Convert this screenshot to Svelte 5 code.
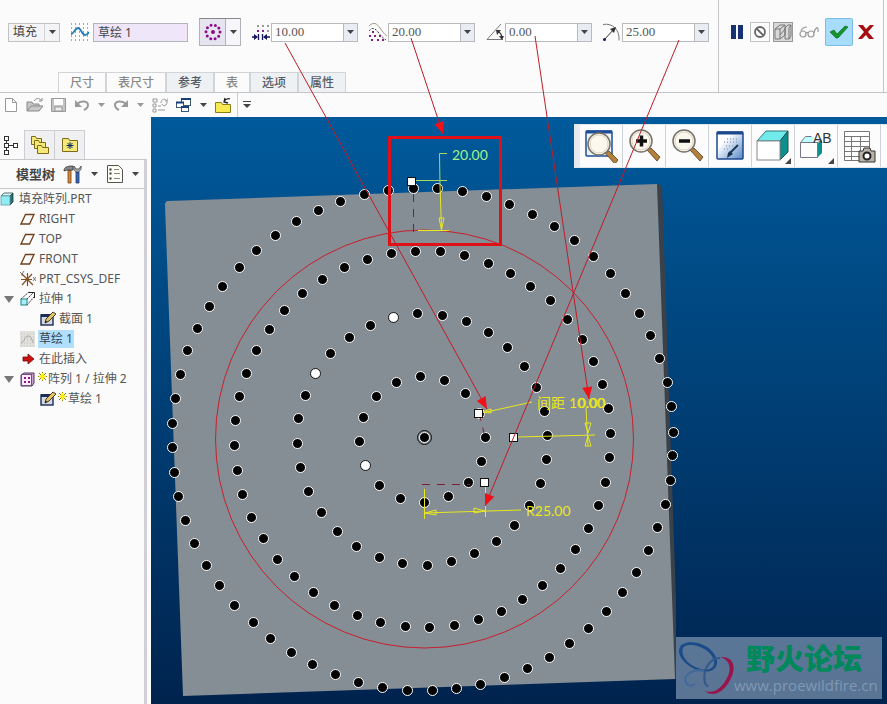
<script lang="ts">
  type Point = [number, number]

  interface Field {
    id: string
    label: string
    value: string
  }

  interface TreeNode {
    label: string
    icon: string
    level: number
    open?: boolean
    selected?: boolean
    fresh?: boolean
  }

  let boundary = $state("填充")
  let sketchName = $state("草绘 1")

  let fields: Field[] = $state([
    { id: "spacing", label: "间距", value: "10.00" },
    { id: "border", label: "边界距离", value: "20.00" },
    { id: "angle", label: "旋转角度", value: "0.00" },
    { id: "radius", label: "径向间距", value: "25.00" },
  ])

  const tabs = [
    { label: "尺寸", enabled: false },
    { label: "表尺寸", enabled: false },
    { label: "参考", enabled: true },
    { label: "表", enabled: false },
    { label: "选项", enabled: true },
    { label: "属性", enabled: true },
  ]

  const tree: TreeNode[] = [
    { label: "填充阵列.PRT", icon: "part", level: 0 },
    { label: "RIGHT", icon: "plane", level: 1 },
    { label: "TOP", icon: "plane", level: 1 },
    { label: "FRONT", icon: "plane", level: 1 },
    { label: "PRT_CSYS_DEF", icon: "csys", level: 1 },
    { label: "拉伸 1", icon: "extrude", level: 1, open: true },
    { label: "截面 1", icon: "section", level: 2 },
    { label: "草绘 1", icon: "sketch", level: 1, selected: true },
    { label: "在此插入", icon: "insert", level: 1 },
    { label: "阵列 1 / 拉伸 2", icon: "pattern", level: 1, open: true, fresh: true },
    { label: "草绘 1", icon: "section", level: 2, fresh: true },
  ]

  const viewTools = [
    { id: "refit", label: "重新调整" },
    { id: "zoomin", label: "放大" },
    { id: "zoomout", label: "缩小" },
    { id: "repaint", label: "重画" },
    { id: "shading", label: "显示样式" },
    { id: "saved", label: "已命名视图" },
    { id: "manager", label: "视图管理器" },
  ]

  // pattern members, one list per ring from the inside out
  const dots: Point[] = [
    [485, 437], [481, 461], [468, 482], [448, 496], [424, 502], [400, 498], [379, 485],
    [359, 441], [363, 417], [376, 396], [396, 382], [420, 376], [444, 380], [465, 393], [479, 413],

    [417, 313], [370, 325], [349, 337], [330, 353], [305, 395], [298, 418], [297, 443],
    [300, 467], [308, 491], [321, 512], [337, 531], [356, 546], [379, 557], [402, 563], [427, 565],
    [451, 561], [474, 553], [496, 541], [514, 525], [529, 505], [540, 483], [546, 459], [547, 435],
    [544, 411], [536, 387], [524, 366], [507, 347], [488, 332], [466, 321], [442, 315],

    [415, 251], [391, 253], [367, 259], [344, 267], [322, 279], [302, 293], [284, 310], [269, 329],
    [256, 350], [246, 373], [239, 396], [235, 420], [234, 445], [237, 470], [242, 494], [251, 517],
    [263, 538], [277, 559], [294, 576], [313, 592], [334, 605], [357, 615], [380, 622], [405, 626],
    [429, 627], [454, 625], [478, 619], [501, 611], [522, 599], [542, 585], [560, 568], [575, 549],
    [588, 528], [598, 505], [605, 482], [609, 457], [610, 433], [608, 408], [602, 384], [593, 361],
    [582, 339], [567, 319], [550, 300], [530, 286], [510, 273], [488, 263], [464, 255], [440, 251],

    [413, 188], [388, 190], [364, 194], [340, 201], [318, 210], [296, 221], [275, 235], [256, 250],
    [239, 267], [222, 286], [209, 306], [197, 328], [187, 350], [180, 374], [175, 398], [172, 423],
    [172, 447], [174, 472], [178, 496], [185, 520], [194, 543], [206, 565], [219, 585], [234, 605],
    [253, 622], [270, 638], [291, 652], [312, 664], [335, 674], [358, 682], [382, 687], [407, 690],
    [432, 690], [456, 688], [480, 684], [504, 677], [527, 668], [549, 657], [569, 643], [588, 628],
    [606, 611], [622, 592], [636, 572], [648, 550], [657, 527], [665, 504], [670, 480], [672, 455],
    [673, 432], [671, 406], [667, 382], [659, 358], [650, 335], [639, 313], [625, 293], [610, 273],
    [593, 256], [574, 240], [554, 226], [532, 214], [509, 204], [486, 196], [462, 191], [437, 188],
  ]

  // members that were switched off
  const skipped: Point[] = [[393, 317], [315, 373], [365, 465]]
  const handles: Point[] = [[411, 181], [478, 413], [513, 437], [484, 482]]

  const arrows: { from: Point; to: Point }[] = [
    { from: [285, 43], to: [487, 409] },
    { from: [411, 38], to: [443, 134] },
    { from: [535, 36], to: [589, 399] },
    { from: [679, 40], to: [485, 506] },
  ]

  function head(from: Point, to: Point) {
    const a = Math.atan2(to[1] - from[1], to[0] - from[0])
    const bx = to[0] - 12 * Math.cos(a)
    const by = to[1] - 12 * Math.sin(a)
    const dx = 5 * Math.sin(a)
    const dy = -5 * Math.cos(a)
    return `${to[0]},${to[1]} ${bx + dx},${by + dy} ${bx - dx},${by - dy}`
  }
</script>

{#snippet fieldIcon(id: string)}
  <svg class="icon" width="18" height="18" viewBox="0 0 18 18" aria-hidden="true">
    {#if id === "spacing"}
      <g fill="#999">
        <rect x="5" y="2" width="2" height="2" /><rect x="10" y="2" width="2" height="2" /><rect x="15" y="2" width="2" height="2" />
        <rect x="15" y="7" width="2" height="2" />
      </g>
      <g fill="#80208a"><rect x="5" y="7" width="2" height="2" /><rect x="10" y="7" width="2" height="2" /></g>
      <path d="M6.500 11v6M10.500 11v6M0 14h5M12 14h6" fill="none" stroke="#16165a" stroke-width="1.300" />
      <path d="M2 11l4 3-4 3zM15 11l-4 3 4 3z" fill="#16165a" />
    {:else if id === "border"}
      <path d="M0 3C5-2 8 1 11 5s4 6 7 8" fill="none" stroke="#a09880" />
      <path d="M0 8c3-4 6-3 9 1s5 6 8 8" fill="none" stroke="#333" stroke-dasharray="2 1.500" />
      <g fill="#802080">
        <rect x="3" y="8" width="2" height="2" /><rect x="0" y="12" width="2" height="2" /><rect x="5" y="12" width="2" height="2" />
        <rect x="10" y="12" width="2" height="2" /><rect x="2" y="16" width="2" height="2" /><rect x="8" y="16" width="2" height="2" /><rect x="13" y="16" width="2" height="2" />
      </g>
    {:else if id === "angle"}
      <path d="M15 1 1 16.500h16" fill="none" stroke="#777" />
      <path d="M11 8c3 1 5 4 5 8" fill="none" stroke="#333" stroke-width="1.300" />
      <path d="M10 7l5 0-4 5zM13 13l5 0-2 4z" fill="#333" />
    {:else}
      <path d="M0 1.500c10-2 17 6 16 16" fill="none" stroke="#777" />
      <path d="M1 17 12 5" stroke="#333" />
      <path d="m13 4-6 2 4 4z" fill="#333" /><circle cx="1.500" cy="16.500" r="1.500" fill="#16165a" />
    {/if}
  </svg>
{/snippet}

{#snippet down(disabled: boolean)}
  <svg class="icon caret" class:off={disabled} width="7" height="4" viewBox="0 0 7 4" aria-hidden="true"><path d="M0 0h7L3.500 4z" /></svg>
{/snippet}

{#snippet treeIcon(id: string)}
  <svg class="icon" width="16" height="16" viewBox="0 0 16 16" aria-hidden="true">
    {#if id === "part"}
      <path d="M1 5l3-3h9l-3 3z" fill="#c8ffff" stroke="#444" stroke-width=".8" />
      <path d="M10 5l3-3v9l-3 3z" fill="#147c80" stroke="#333" stroke-width=".8" />
      <rect x="1" y="5" width="9" height="9" fill="#8eeef4" stroke="#69a" stroke-width=".8" />
    {:else if id === "plane"}
      <path d="M5.500 3.500H14L9.500 13H1z" fill="none" stroke="#70401c" stroke-width="1.300" />
    {:else if id === "csys"}
      <path d="M2 3l11 11M12 3 2 14M7.500 2v13M1 8.500h11" stroke="#805020" stroke-width="1.200" />
      <path d="M13 6l3 4M16 6l-3 4M0 1l2 2 2-3M2 3v2" fill="none" stroke="#555" stroke-width=".8" />
    {:else if id === "extrude"}
      <path d="M1 8 9 1M7 14l7-8M7 8l7-7" fill="none" stroke="#333" stroke-dasharray="2 1" />
      <rect x="1" y="8" width="6" height="6" fill="#a5f2f6" stroke="#287f86" />
      <path d="M9 1.500h5.500V7" fill="none" stroke="#222" />
    {:else if id === "section"}
      <rect x="1" y="4" width="12" height="10" fill="#d4d8e2" stroke="#182c54" stroke-width="1.400" />
      <path d="M1 3h12v3H1z" fill="#182c54" />
      <path d="M5 12l1-4 7-7 3 2-7 7z" fill="#e4c46a" stroke="#3a2c10" stroke-width=".9" />
      <path d="M5 12l.5-2.500L7.500 11z" fill="#222" />
    {:else if id === "sketch"}
      <rect x="0" y="0" width="15" height="16" fill="#e2e0dc" />
      <path d="M1 3h15M1 6h15M1 9h15M1 12h15M1 15h15" stroke="#c4c2bc" stroke-dasharray="1 2" />
      <path d="M1 12c3 0 4-7 7-7s4 3 5 7" fill="none" stroke="#aaa69e" />
    {:else if id === "insert"}
      <path d="M3 6h5V3l6 5-6 5v-3H3z" fill="#d01010" stroke="#601010" stroke-width=".8" />
    {:else}
      <path d="M1 4l3-2h10v10l-2 3H1z" fill="#c8a0d0" stroke="#503860" />
      <rect x="1.500" y="3.500" width="10" height="11" fill="#fce8fc" stroke="#70507c" />
      <path d="M4 6h2v2H4zM8 6h2v2H8zM4 10h2v2H4zM8 10h2v2H8z" fill="#802080" />
    {/if}
  </svg>
{/snippet}

{#snippet lens(sign: string)}
  <path d="M20 21l4-2 9 9-3 4z" fill="#b3803d" stroke="#583c18" stroke-width=".8" />
  <circle cx="14" cy="12" r="11" fill="#fbf8ee" stroke="#77716a" stroke-width="1.500" />
  <circle cx="14" cy="12" r="9" fill="none" stroke="#ddd5c4" />
  {#if sign}
    <path d={sign} stroke="#111" stroke-width="3.500" />
  {/if}
{/snippet}

{#snippet viewIcon(id: string)}
  <svg class="icon" width="34" height="34" viewBox="0 0 34 34" aria-hidden="true">
    {#if id === "refit"}
      <rect x="2" y="2" width="26" height="25" rx="1" fill="#eef3fb" stroke="#1d4d98" stroke-width="1.500" />
      <path d="M2 3h26" stroke="#1d4d98" stroke-width="3" />
      <g transform="translate(1 3)">{@render lens("")}</g>
    {:else if id === "zoomin"}
      {@render lens("M9 12h11M14.500 6.500v11")}
    {:else if id === "zoomout"}
      {@render lens("M9 12h11")}
    {:else if id === "repaint"}
      <defs><linearGradient id="sheet" x2="1" y2="1"><stop offset=".3" stop-color="#fff" /><stop offset="1" stop-color="#5587c6" /></linearGradient></defs>
      <rect x="4" y="3" width="26" height="27" rx="1" fill="url(#sheet)" stroke="#1c488c" stroke-width="1.500" />
      <path d="M4 4h26" stroke="#1c488c" stroke-width="3" />
      <path d="M14 10h12M11 13h14M13 17h8M11 20h6" stroke="#8fa6c4" stroke-width="1.500" stroke-dasharray="1 2" />
      <path d="M25 16 16 25" stroke="#18385c" stroke-width="2" /><path d="M17 22l3 3-6 4 1-5z" fill="#163456" />
    {:else if id === "shading"}
      <path d="M1 12 10 2h22l-8 10z" fill="#70eaea" stroke="#377" />
      <path d="M24 12l8-10v21l-8 8z" fill="#0a908f" stroke="#255" />
      <rect x="1" y="12" width="23" height="19" fill="#fff" stroke="#888" />
    {:else if id === "saved"}
      <path d="M2 13l5-5h8l-2 5z" fill="#baffff" /><path d="M18 15l5-4v13l-5 5z" fill="#0a908f" />
      <path d="M1.500 13.500l5-6h6M1.500 13.500h17v15h-17zM18 14l5-3" fill="none" stroke="#778" />
      <text x="14" y="14" class="ab">AB</text>
    {:else}
      <path d="M2.500 2.500h25v29h-25zM2.500 7.500h25M2.500 12.500h25M2.500 17.500h25M2.500 22.500h25M2.500 27.500h25M9.500 7.500v24M18.500 7.500v24" fill="#fff" stroke="#777" />
      <path d="M17 22h4l1-3h6l1 3h4v11H17z" fill="#b9b4a8" stroke="#333" />
      <circle cx="25" cy="27" r="3.500" fill="#fff" stroke="#222" stroke-width="2" />
    {/if}
  </svg>
{/snippet}

<main class="app">
  <header class="ribbon">
    <section class="dashboard">
      <div class="params">
        <span class="select-box">
          <select bind:value={boundary} aria-label="阵列类型"><option>填充</option></select>
          <span class="select-arrow">{@render down(false)}</span>
        </span>

        <label class="param name-param">
          <svg class="icon" width="18" height="18" viewBox="0 0 18 18" aria-hidden="true">
            <path d="M0 1h18M0 5h18M0 9h18M0 13h18M0 17h18" stroke="#555" stroke-dasharray="1 3" />
            <path d="M0 11c3 0 4-6 7-6s4 7 7 7c2 0 3-1 4-3" fill="none" stroke="#247eb8" stroke-width="1.800" />
          </svg>
          <input class="sketch-name" bind:value={sketchName} aria-label="草绘" />
        </label>

        <div class="grid-type">
          <button type="button" class="grid-main" aria-label="栅格模板">
            <svg class="icon" width="20" height="20" viewBox="0 0 20 20" aria-hidden="true">
              <circle cx="10" cy="10" r="7" fill="none" stroke="#8c0c8c" stroke-width="3" stroke-linecap="round" stroke-dasharray="0 4.400" />
              <circle cx="10" cy="10" r="2" fill="#8c0c8c" />
            </svg>
          </button>
          <button type="button" class="grid-more" aria-label="更多模板">{@render down(false)}</button>
        </div>

        {#each fields as field (field.id)}
          <div class="param">
            {@render fieldIcon(field.id)}
            <div class="combo">
              <input bind:value={field.value} aria-label={field.label} />
              <button type="button" aria-label="{field.label}列表">{@render down(false)}</button>
            </div>
          </div>
        {/each}
      </div>

      <nav class="tabs">
        {#each tabs as tab (tab.label)}
          <button type="button" class:enabled={tab.enabled}>{tab.label}</button>
        {/each}
      </nav>
    </section>

    <section class="actions">
      <button type="button" class="act pause" aria-label="暂停">
        <svg class="icon" width="12" height="14" viewBox="0 0 12 14"><path d="M0 0h5v14H0zM7 0h5v14H7z" fill="#163272" /></svg>
      </button>
      <button type="button" class="act boxed" aria-label="无预览">
        <svg class="icon" width="14" height="14" viewBox="0 0 14 14"><circle cx="7" cy="7" r="5" fill="none" stroke="#666" stroke-width="1.800" /><path d="M3.500 3.500l7 7" stroke="#666" stroke-width="1.800" /></svg>
      </button>
      <button type="button" class="act boxed pressed" aria-label="分离预览">
        <svg class="icon" width="18" height="18" viewBox="0 0 18 18"><path d="M1 6l5-4h5v10l-5 4H1zM1 6h5v10M6 6l5-4M11 5l3-3h3v11l-2 3h-4zM15 16V5M15 5l2-3M6 12l5-6" fill="none" stroke="#777" /></svg>
      </button>
      <button type="button" class="act glasses" aria-label="验证">
        <svg class="icon" width="20" height="12" viewBox="0 0 20 12"><g fill="none" stroke="#999" stroke-width="1.200"><circle cx="4" cy="8" r="3" /><circle cx="12" cy="8" r="3" /><path d="M7 7c1-1 1-1 2 0M2 5c1-3 3-4 6-4M15 7c1-5 4-7 4-4v3" /></g></svg>
      </button>
      <button type="button" class="act ok" aria-label="确定">
        <svg class="icon" width="18" height="14" viewBox="0 0 18 14"><path d="M0 7l4-2 3 4 8-8 3 1L8 13H6z" fill="#12952c" stroke="#056018" stroke-width=".6" /></svg>
      </button>
      <button type="button" class="act cancel" aria-label="取消">
        <svg class="icon" width="16" height="14" viewBox="0 0 16 14"><path d="M0 0h5l3 4 4-4h4l-6 7 6 7h-5l-3-4-4 4H0l6-7z" fill="#a60d12" /></svg>
      </button>
    </section>
    <div class="ribbon-end"></div>
  </header>

  <nav class="quickbar" aria-label="快速访问">
    <button type="button" class="q" aria-label="新建">
      <svg class="icon" width="14" height="16" viewBox="0 0 14 16"><path d="M1.500 1.500h7l4 4v9h-11zM8.500 1.500v4h4" fill="#fff" stroke="#999" /></svg>
    </button>
    <button type="button" class="q" aria-label="打开">
      <svg class="icon" width="17" height="16" viewBox="0 0 17 16"><path d="M1 14V5h5l1 2h6v2M1 14l4-5h12l-4 5z" fill="#c8c8c8" stroke="#888" /><path d="M8 4c2-3 5-3 7-1m1-2v3h-3" fill="none" stroke="#888" /></svg>
    </button>
    <button type="button" class="q" aria-label="保存">
      <svg class="icon" width="15" height="16" viewBox="0 0 15 16"><path d="M.5 1.500h14v13H.5z" fill="#c4c4c4" stroke="#999" /><path d="M3 2h9v6H3z" fill="#fff" /><path d="M4 10h7v4H4z" fill="#eee" stroke="#999" /></svg>
    </button>
    <button type="button" class="q" aria-label="撤消">
      <svg class="icon" width="16" height="12" viewBox="0 0 16 12"><path d="M3 5c4-4 11-3 11 1 0 3-2 4-4 5" fill="none" stroke="#999" stroke-width="2" /><path d="M1 1v7h7z" fill="#999" /></svg>
    </button>
    {@render down(true)}
    <button type="button" class="q" aria-label="重做">
      <svg class="icon" width="16" height="12" viewBox="0 0 16 12"><path d="M13 5C9 1 2 2 2 6c0 3 2 4 4 5" fill="none" stroke="#999" stroke-width="2" /><path d="M15 1v7H8z" fill="#999" /></svg>
    </button>
    {@render down(true)}
    <button type="button" class="q" aria-label="重新生成">
      <svg class="icon" width="16" height="16" viewBox="0 0 16 16"><path d="M1 2h4v3H1zM1 7h3v3H1zM1 12h3v3H1zM6 13h7M6 9h3M9 6c0-4 4-5 6-2M15 5c0 4-4 5-5 2M13 4h3V1" fill="none" stroke="#999" /></svg>
    </button>
    <button type="button" class="q" aria-label="窗口">
      <svg class="icon" width="16" height="16" viewBox="0 0 16 16"><g fill="#fff" stroke="#3c5878"><rect x="5.500" y="1.500" width="9" height="7" /><rect x=".5" y="5.500" width="7" height="5" /><rect x="5.500" y="9.500" width="7" height="5" /></g><path d="M5 2h10M0 5.500h8M5 10h8" stroke="#173f78" stroke-width="2" /></svg>
    </button>
    {@render down(false)}
    <button type="button" class="q" aria-label="关闭">
      <svg class="icon" width="17" height="17" viewBox="0 0 17 17"><path d="M.5 5.500h6l1 2h8v8H.5z" fill="#f6ea50" stroke="#8a7c18" /><path d="M9 4c2-2 4-3 6-2M10 1 9 5l4 1" fill="none" stroke="#222" stroke-width="1.300" /></svg>
    </button>
    <span class="q-sep"></span>
    <button type="button" class="q" aria-label="自定义">
      <svg class="icon" width="8" height="8" viewBox="0 0 8 8"><path d="M0 0h8v1H0zM0 3h8L4 7z" fill="#444" /></svg>
    </button>
  </nav>

  <div class="workspace">
    <aside class="navigator">
      <div class="nav-tabs">
        <button type="button" class="active" aria-label="模型树">
          <svg class="icon" width="16" height="20" viewBox="0 0 16 20"><path d="M4.500 5v11M4 10.500h8" fill="none" stroke="#333" /><g fill="#fff" stroke="#333"><rect x="2.500" y="1.500" width="4" height="4" /><rect x="2.500" y="8.500" width="4" height="4" /><rect x="2.500" y="15.500" width="4" height="4" /><rect x="11.500" y="8.500" width="4" height="4" /></g></svg>
        </button>
        <button type="button" aria-label="文件夹浏览器">
          <svg class="icon" width="20" height="20" viewBox="0 0 20 20"><g fill="#f3e878" stroke="#7a6c1a"><path d="M1.500 1.500h4l1 2h5v6h-10z" /><path d="M4.500 5.500h4l1 2h6v6h-11z" /><path d="M7.500 10.500h4l1 2h6v6h-11z" /></g></svg>
        </button>
        <button type="button" aria-label="收藏夹">
          <svg class="icon" width="18" height="16" viewBox="0 0 18 16"><path d="M1.500 1.500h6l1 2h8v11h-15z" fill="#f3e878" stroke="#7a6c1a" /><path d="M9 5v7M5.500 8.500h7M6.500 6l5 5M11.500 6l-5 5" stroke="#102c60" /></svg>
        </button>
      </div>

      <div class="tree-head">
        <h2>模型树</h2>
        <button type="button" class="q" aria-label="设置">
          <svg class="icon" width="20" height="20" viewBox="0 0 20 20"><path d="M5 6h3v13H5z" fill="#d8863c" stroke="#734218" stroke-width=".8" /><path d="M1 7c0-4 3-5 9-5v4H4z" fill="#888" stroke="#333" stroke-width=".8" /><path d="M13 8h3v11h-3z" fill="#3468b0" stroke="#1c3c70" stroke-width=".8" /><path d="M11 2c-1 4 1 6 3 6s5-2 4-6l-2 3h-3z" fill="#aaa" stroke="#444" stroke-width=".8" /></svg>
        </button>
        {@render down(false)}
        <button type="button" class="q" aria-label="显示">
          <svg class="icon" width="18" height="20" viewBox="0 0 18 20"><path d="M1.500 1.500h11l4 4v13h-15z" fill="#fffef4" stroke="#555" /><path d="M3.500 5.500h2M3.500 9.500h2M3.500 14.500h2" stroke="#333" stroke-width="2" /><path d="M8 5.500h5M8 9.500h6M8 14.500h6" stroke="#888" /></svg>
        </button>
        {@render down(false)}
      </div>

      <ul class="tree">
        {#each tree as node}
          <li class="row level-{node.level}">
            {#if node.level === 1}
              <span class="twist">
                {#if node.open}
                  <svg class="icon" width="10" height="7" viewBox="0 0 10 7" aria-hidden="true"><path d="M0 0h10L5 7z" fill="#777" /></svg>
                {/if}
              </span>
            {/if}
            {@render treeIcon(node.icon)}
            {#if node.fresh}
              <svg class="icon star" width="9" height="9" viewBox="0 0 9 9" aria-hidden="true"><path d="M4.500 0v9M0 4.500h9M1 1l7 7M8 1 1 8" stroke="#8c8400" /><path d="M4.500 1v7M1 4.500h7" stroke="#ffee20" stroke-width="2" /></svg>
            {/if}
            <span class="node-label" class:selected={node.selected} class:tight={node.fresh}>{node.label}</span>
          </li>
        {/each}
      </ul>
    </aside>

    <section class="canvas">
      <svg class="scene" aria-label="填充阵列">
        <g transform="translate(-151 -117)">
          <path d="M657 184 662 186 676 600 676 679 674 679z" fill="#3a4148" />
          <path d="M168 201 657 184 675 679 183 696 165 205q0-4 3-4z" fill="#858d95" />
          <circle class="sketch" cx="424.500" cy="439" r="209" />

          <g transform="translate(.5 .5)">
            {#each dots as [x, y]}
              <circle class="dot" cx={x} cy={y} r="5" />
            {/each}
            {#each skipped as [x, y]}
              <circle class="dot skipped" cx={x} cy={y} r="5" />
            {/each}
            <circle cx="424" cy="437" r="7" fill="none" stroke="#111" />
            <circle class="dot" cx="424" cy="437" r="5" />
          </g>

          <path class="guide" d="M413.500 194v38M479 413l5 20M422 484.500h48" />

          <g class="dim">
            <path class="green-line" d="M447 153.500h-7.500L440 185M415 180.500h32" />
            <path d="M440 185l1.500 44M418 230.500h31M439 218l2.500 12 2.500-12z" />
            <path d="M482 413l50-11M482 412l9-3v4z" />
            <path d="M517 437l78-2M586 408l2 38M585 423l3 10 3-10zM585 446l3-10 3 10z" />
            <path d="M424.500 489v30M485.500 487v30M424 513l97-3M425 513l11-3v5zM485 511l-11-3v5z" />
            <text class="green" x="452" y="160">20.00</text>
            <text x="537" y="408">间距</text>
            <text x="569" y="408">10.00</text>
            <text x="578" y="408">0.00</text>
            <text x="526" y="516">R25.00</text>
          </g>

          {#each handles as [x, y]}
            <rect class="handle" x={x - 3.5} y={y - 3.5} width="8" height="8" />
          {/each}
        </g>
      </svg>

      <div class="view-bar">
        <span class="grip"></span>
        {#each viewTools as tool (tool.id)}
          <button type="button" aria-label={tool.label}>
            {@render viewIcon(tool.id)}
            {#if tool.id === "shading" || tool.id === "saved"}<span class="corner"></span>{/if}
          </button>
        {/each}
      </div>

      <div class="watermark">
        <svg class="icon" width="56" height="58" viewBox="0 0 56 58" aria-hidden="true">
          <path fill-rule="evenodd" fill="#1b4c88" d="M2 6C7-3 34 1 39 19c1 9-6 13-16 11C11 28-3 15 2 6zm3 1c-3 8 6 18 18 21 8 2 14-1 13-8C33 6 9 0 5 7z" />
          <path d="M26 30C12 27 3 37 9 43c2 2 5 2 8 0" fill="none" stroke="#44689a" stroke-width="2" />
          <path d="M42 17C31 17 24 30 27 42l3 4" fill="none" stroke="#31598a" stroke-width="2" />
          <path fill="#98154c" d="M42 16c15-1 17 12 9 25-7 12-18 15-24 9 9 3 16-2 22-13 5-10 3-18-7-21z" />
        </svg>
        <div class="mark-text">
          <strong>野火论坛</strong>
          <span>www.proewildfire.cn</span>
        </div>
      </div>
    </section>
  </div>

  <svg class="callouts" aria-hidden="true">
    {#each arrows as arrow}
      <line x1={arrow.from[0]} y1={arrow.from[1]} x2={arrow.to[0]} y2={arrow.to[1]} />
      <polygon points={head(arrow.from, arrow.to)} />
    {/each}
    <rect x="389.500" y="137.500" width="111" height="107" />
  </svg>
</main>

<style>
  :global(body) {
    background: #fbfbfb;
  }

  .app {
    position: relative;
    display: flex;
    flex-direction: column;
    height: 100vh;
    overflow: hidden;
    background: #fbfbfb;
    color: #555;
    font: 12px/16px "Noto Sans", "Noto Sans CJK SC", sans-serif;
  }

  button,
  input,
  select {
    box-sizing: border-box;
    margin: 0;
    padding: 0;
    border: 0;
    border-radius: 0;
    background: none;
    color: inherit;
    font: inherit;
  }

  .icon {
    display: block;
    flex-shrink: 0;
  }

  .caret {
    fill: #444;
  }

  .caret.off {
    fill: #999;
  }

  .ribbon {
    display: flex;
    height: 92px;
    flex-shrink: 0;
    border-bottom: 1px solid #c3c5c8;
  }

  .dashboard {
    flex: 1;
    min-width: 0;
    display: flex;
    flex-direction: column;
    justify-content: space-between;
    padding-top: 18px;
  }

  .params {
    display: flex;
    align-items: center;
    gap: 11px;
    height: 28px;
    padding-left: 8px;
  }

  .select-box {
    display: grid;
    width: 52px;
    height: 19px;
    box-sizing: border-box;
    border: 1px solid #c0c2c6;
    background: #f4f4f6;
  }

  .select-box select {
    grid-area: 1 / 1;
    appearance: none;
    padding-left: 4px;
    color: #444;
  }

  .select-arrow {
    grid-area: 1 / 1;
    justify-self: end;
    display: grid;
    place-items: center;
    width: 14px;
    border-left: 1px solid #d0d2d6;
    pointer-events: none;
  }

  .param {
    display: flex;
    align-items: center;
    gap: 1px;
  }

  .name-param {
    gap: 4px;
  }

  .sketch-name {
    width: 95px;
    height: 19px;
    padding-left: 4px;
    border: 1px solid #b4b4bc;
    background: #f0e6fa;
    color: #444;
  }

  .grid-type {
    display: flex;
    box-sizing: border-box;
    width: 42px;
    height: 28px;
    border: 1px solid #b0b2b8;
    border-top-color: #888;
    background: #f6f6fa;
  }

  .grid-main {
    display: grid;
    place-items: center;
    flex: 1;
    background: #e6e4ee;
    border-right: 1px solid #b0b2b8;
  }

  .grid-more {
    display: grid;
    place-items: center;
    width: 14px;
  }

  .combo {
    display: flex;
    box-sizing: border-box;
    width: 87px;
    height: 19px;
    border: 1px solid #b8babe;
    background: #fff;
  }

  .combo input {
    flex: 1;
    min-width: 0;
    padding-left: 3px;
    font: 13px/16px "Liberation Serif", serif;
  }

  .combo button {
    display: grid;
    place-items: center;
    width: 14px;
    border-left: 1px solid #b8babe;
    background: #e9edf3;
  }

  .tabs {
    display: flex;
    padding-left: 58px;
  }

  .tabs button {
    height: 20px;
    padding: 0 11px;
    border: 1px solid #d2d4d8;
    border-bottom: 0;
    color: #888;
    font-weight: 500;
  }

  .tabs .enabled {
    background: #eef1f4;
    color: #555c64;
  }

  .actions {
    display: flex;
    align-items: flex-start;
    gap: 3px;
    box-sizing: border-box;
    width: 166px;
    padding: 18px 0 0 8px;
    border-left: 1px solid #c3c5c8;
    border-right: 1px solid #c3c5c8;
  }

  .act {
    display: grid;
    place-items: center;
    width: 20px;
    height: 28px;
  }

  .boxed {
    height: 20px;
    margin-top: 4px;
    border: 1px solid #c0c2c4;
  }

  .pressed {
    border-color: #999;
    background: #d8d8d8;
  }

  .glasses {
    width: 26px;
  }

  .ok {
    width: 28px;
    border: 1px solid #7cbce4;
    border-radius: 2px;
    background: #a8dcfb;
  }

  .ribbon-end {
    width: 3px;
  }

  .quickbar {
    display: flex;
    align-items: center;
    gap: 8px;
    height: 24px;
    padding-left: 4px;
    flex-shrink: 0;
  }

  .q {
    display: grid;
    place-items: center;
  }

  .q-sep {
    width: 1px;
    height: 24px;
    margin: 0 -3px;
    background: #ccc;
  }

  .workspace {
    flex: 1;
    min-height: 0;
    display: flex;
    gap: 4px;
  }

  .navigator {
    display: flex;
    flex-direction: column;
    box-sizing: border-box;
    width: 147px;
    flex-shrink: 0;
    padding-top: 13px;
  }

  .nav-tabs {
    display: flex;
    border-bottom: 1px solid #c8c8cc;
  }

  .nav-tabs button {
    display: grid;
    place-items: center;
    width: 30px;
    height: 29px;
    border: 1px solid #ccced2;
    border-left: 0;
    border-bottom: 0;
    background: #f0f0f2;
  }

  .nav-tabs .active {
    width: 25px;
    padding-right: 4px;
    border-top: 0;
    background: none;
  }

  .tree-head {
    display: flex;
    align-items: center;
    gap: 8px;
    height: 28px;
    padding-left: 16px;
    border-right: 3px solid #d0d0d6;
    border-bottom: 1px solid #c8c8cc;
  }

  h2 {
    margin: 0;
    color: #444;
    font-size: 13px;
    line-height: 16px;
    white-space: nowrap;
  }

  .tree {
    flex: 1;
    margin: 0;
    padding: 0;
    border-right: 3px solid #d0d0d6;
    list-style: none;
  }

  .row {
    display: flex;
    align-items: center;
    height: 20px;
    white-space: nowrap;
  }

  .level-2 {
    padding-left: 40px;
  }

  .twist {
    width: 16px;
    padding-left: 4px;
  }

  .star {
    align-self: flex-start;
    margin: 3px 0 0 2px;
  }

  .node-label {
    margin-left: 2px;
    padding: 1px;
  }

  .node-label.tight {
    margin-left: 0;
  }

  .selected {
    background: #b2dffb;
    color: #345;
  }

  .canvas {
    position: relative;
    flex: 1;
    min-width: 0;
    overflow: hidden;
    background: linear-gradient(#005a9b, #00234e);
  }

  .scene {
    display: block;
    width: 100%;
    height: 100%;
  }

  .sketch {
    fill: none;
    stroke: #c8202c;
  }

  .dot {
    fill: #000;
    stroke: #fff;
  }

  .dot.skipped {
    fill: #fff;
    stroke: #111;
  }

  .handle {
    fill: #fff;
    stroke: #111;
  }

  .guide {
    fill: none;
    stroke: #7c2038;
    stroke-dasharray: 8 7;
  }

  .dim path {
    fill: none;
    stroke: #e8e820;
  }

  .dim .green-line {
    stroke: #a8d860;
  }

  .dim text {
    fill: #e8e820;
    font: 14px Lato, "Noto Sans CJK SC", sans-serif;
  }

  .dim .green {
    fill: #a4f08c;
  }

  .view-bar {
    position: absolute;
    top: 7px;
    right: 0;
    display: flex;
    box-sizing: border-box;
    width: 313px;
    height: 44px;
    background: #fcfcfc;
    border: 1px solid #dfe6ec;
    border-right: 0;
  }

  .grip {
    width: 5px;
    background: #e6eaf0;
  }

  .view-bar button {
    position: relative;
    display: grid;
    place-items: center;
    width: 43px;
    border-right: 1px solid #ccd2d8;
  }

  .corner {
    position: absolute;
    right: 3px;
    bottom: 3px;
    border: 3px solid #444;
    border-top-color: transparent;
    border-left-color: transparent;
  }

  .ab {
    fill: #333;
    font: 14px "Liberation Sans", sans-serif;
  }

  .watermark {
    position: absolute;
    right: 5px;
    bottom: 5px;
    display: flex;
    box-sizing: border-box;
    width: 206px;
    height: 62px;
    padding-top: 4px;
    padding-left: 2px;
    background: rgba(150, 170, 195, 0.6);
  }

  .mark-text {
    display: flex;
    flex-direction: column;
    white-space: nowrap;
  }

  .mark-text strong {
    padding-left: 12px;
    color: #00885c;
    font: 900 29px/32px "Noto Sans CJK SC", sans-serif;
  }

  .mark-text span {
    color: #7f98b4;
    font: 15px/24px "Open Sans", sans-serif;
  }

  .callouts {
    position: absolute;
    inset: 0;
    width: 100%;
    height: 100%;
    pointer-events: none;
  }

  .callouts line {
    stroke: #c01c28;
  }

  .callouts polygon {
    fill: #f01018;
  }

  .callouts rect {
    fill: none;
    stroke: #e01018;
    stroke-width: 3px;
  }
</style>
